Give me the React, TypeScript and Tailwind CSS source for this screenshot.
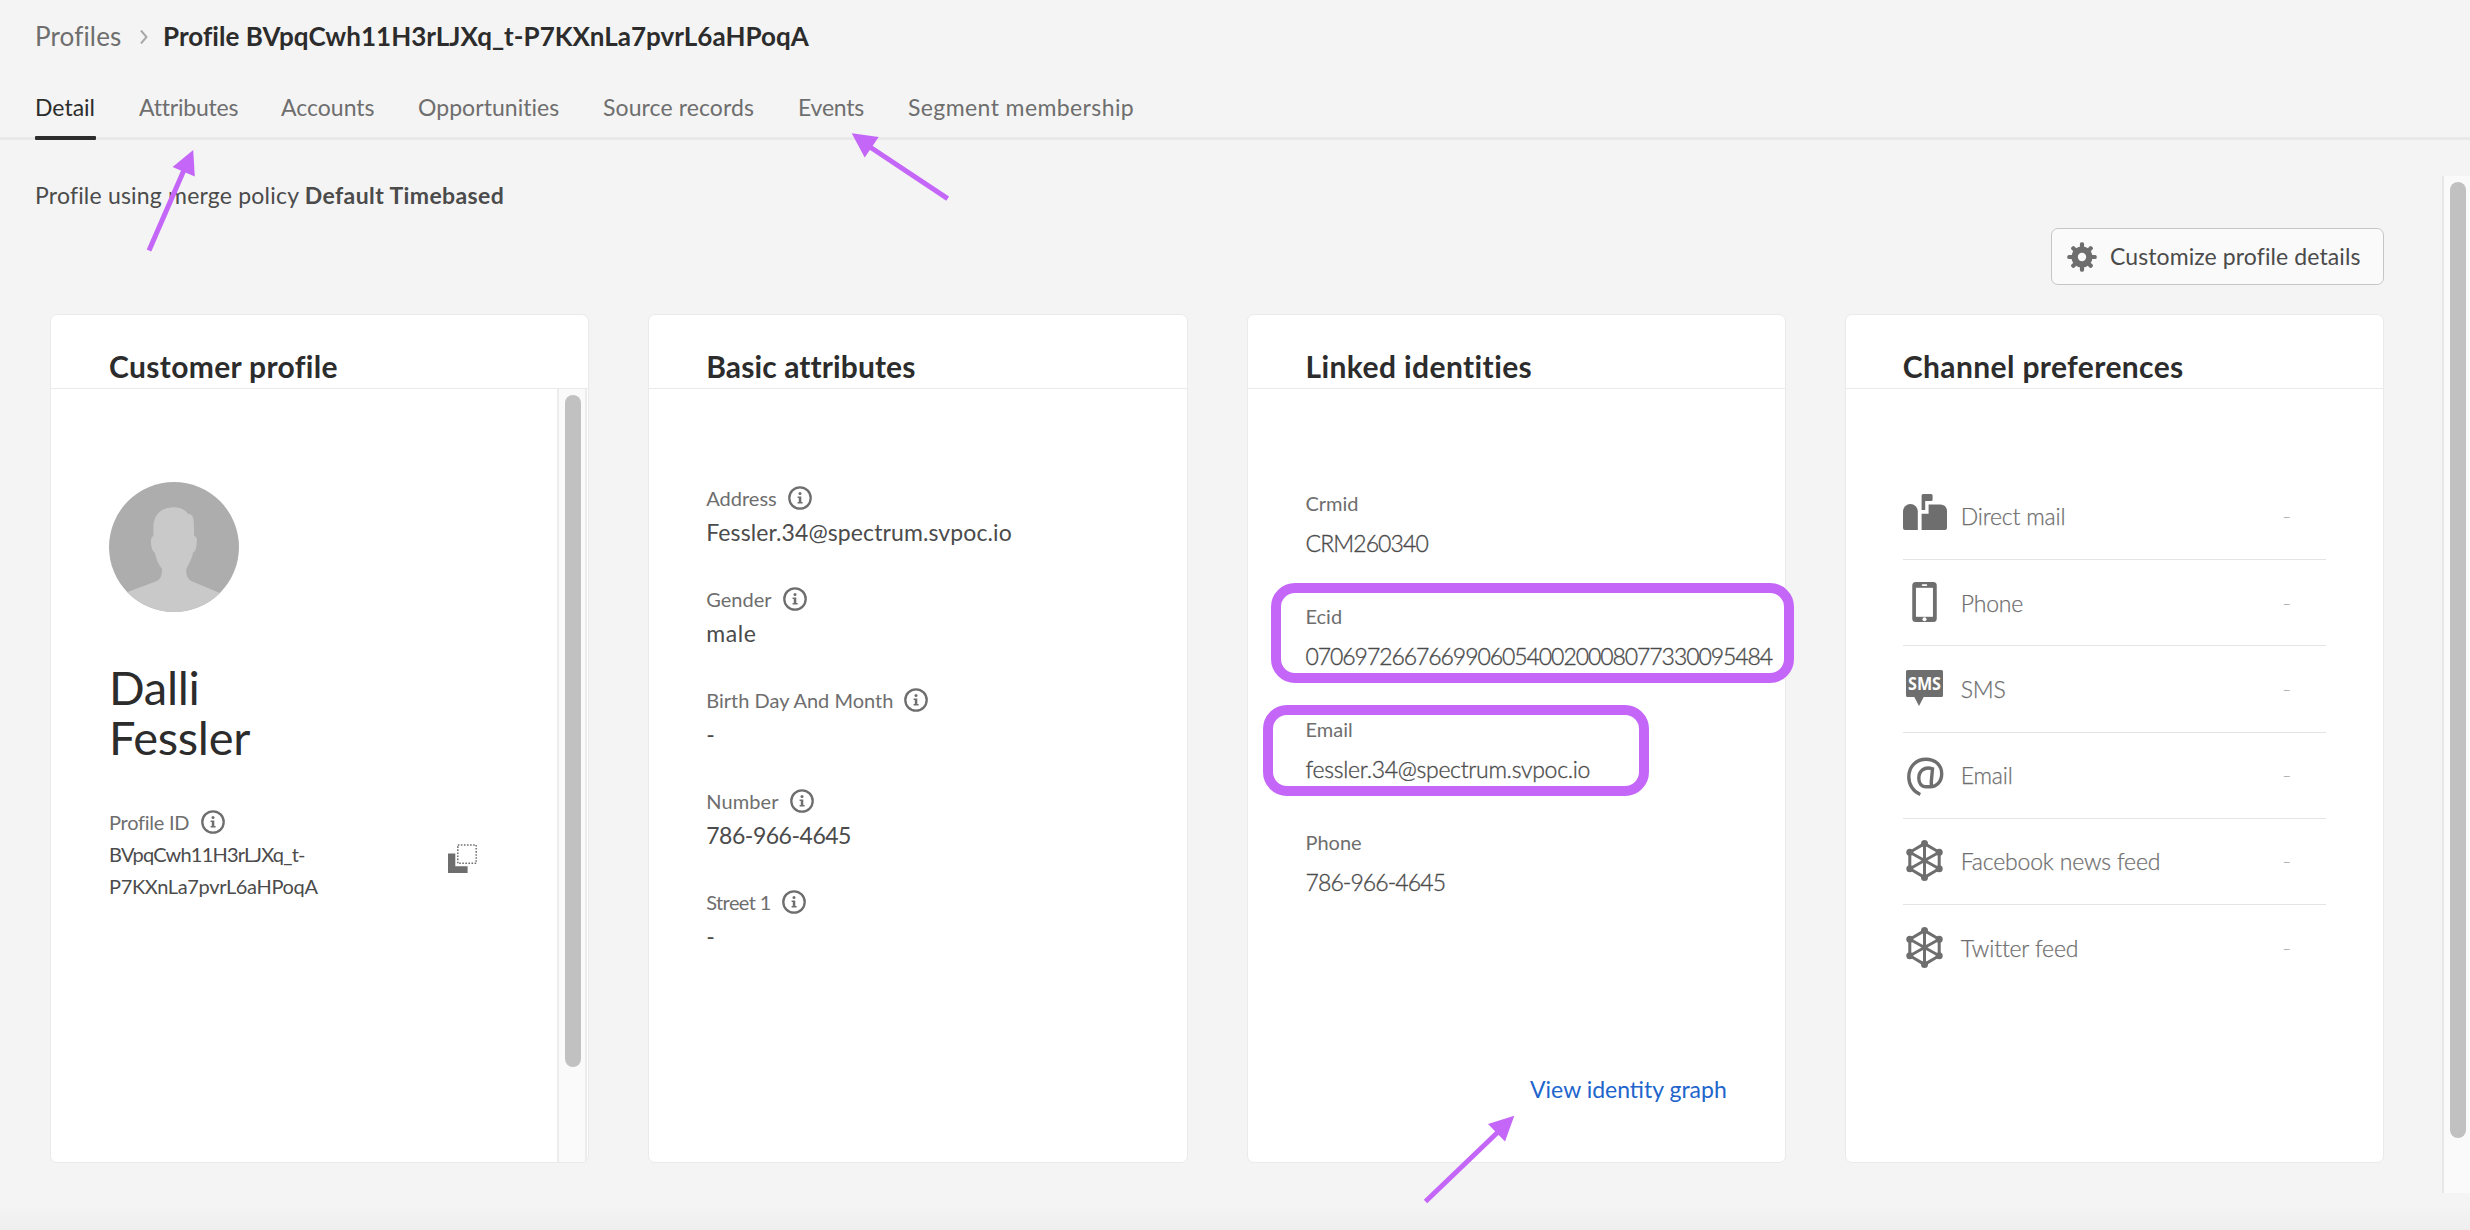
import type { ReactNode } from 'react';

function InfoIcon() {
  return (
    <svg viewBox="0 0 24 24" className="h-6 w-6 shrink-0 text-[#6e6e6e]" fill="none">
      <circle cx="12" cy="12" r="10.7" stroke="currentColor" strokeWidth="2.3" />
      <circle cx="12" cy="7.6" r="1.5" fill="currentColor" />
      <path d="M9.6 10.4h3.7v5.7h1.3v1.5H9.6v-1.5h1.2v-4.2H9.6z" fill="currentColor" />
    </svg>
  );
}

function GearIcon() {
  return (
    <svg viewBox="-15 -15 30 30" className="h-[30px] w-[30px] shrink-0" fill="#6e6e6e">
      {[0, 45, 90, 135].map((a) => (
        <rect
          key={a}
          x="-2.1"
          y={a % 90 ? -14.3 : -14.7}
          width="4.2"
          height={a % 90 ? 28.6 : 29.4}
          rx="1.6"
          transform={`rotate(${a})`}
        />
      ))}
      <circle r="10.6" />
      <circle r="4.2" fill="#fafafa" />
    </svg>
  );
}

function CopyIcon() {
  return (
    <svg viewBox="0 0 29 30" className="h-[30px] w-[29px]" fill="none">
      <path d="M0 9.5h7.3v12.7h12.3V29H0z" fill="#6e6e6e" />
      <rect x="9.8" y="0.9" width="18.4" height="18.4" stroke="#6e6e6e" strokeWidth="1.5" strokeDasharray="1.6 1.47" />
    </svg>
  );
}

function Avatar() {
  return (
    <svg viewBox="0 0 130 130" className="h-[130px] w-[130px]">
      <clipPath id="avatar">
        <circle cx="65" cy="65" r="65" />
      </clipPath>
      <g clipPath="url(#avatar)">
        <rect width="130" height="130" fill="#adadad" />
        <path
          d="M65 25.3C71 25.3 76 27.5 79.3 32C82.5 32 84.5 34 84.8 40L85.2 54C87.6 54.5 88.3 57 87.8 60C87.4 65 86.6 70 84 70.5C83 78 78 84 77.2 88C77 94 79 97.5 84 99.8L111 111L130 130H0L18.5 110L46 99.8C51 98 53 95 53 87C49 82 47 76 45.6 70C43.5 70 42 65 42 59C42 56 43 54.5 44.4 54V45C44.4 33 52 25.3 65 25.3Z"
          fill="#c9c9c9"
        />
      </g>
    </svg>
  );
}

function MailboxIcon() {
  return (
    <svg viewBox="0 0 44 36" className="mb-[9px] h-9 w-11" fill="#6e6e6e">
      <path d="M0 17.5a7.4 7.4 0 0 1 14.8 0V36H2a2 2 0 0 1-2-2z" />
      <path d="M18.6 1.5A1.5 1.5 0 0 1 20.1 0h8a1.5 1.5 0 0 1 1.5 1.5V5.4a1.5 1.5 0 0 1-1.5 1.5H22.2V16H18.6z" />
      <path d="M25.6 10.4H37.5a6.5 6.5 0 0 1 6.5 6.5V34a2 2 0 0 1-2 2H18.6V19.8H25.6z" />
    </svg>
  );
}

function PhoneIcon() {
  return (
    <svg viewBox="0 0 24.5 40" className="mt-[-2px] h-10 w-[25px]">
      <rect width="24.5" height="40" rx="3.5" fill="#6e6e6e" />
      <rect x="3.7" y="5.8" width="17" height="29" fill="#fff" />
      <rect x="9.5" y="2.2" width="5.5" height="1.8" rx="0.9" fill="#fff" />
      <circle cx="12.25" cy="37.3" r="2" fill="#fff" />
    </svg>
  );
}

function SmsIcon() {
  return (
    <svg viewBox="0 0 37 36" className="mt-[-2px] h-9 w-[37px]">
      <path
        d="M1.5 0h34A1.5 1.5 0 0 1 37 1.5V25.5A1.5 1.5 0 0 1 35.5 27H17.7L13 36L8.3 27H1.5A1.5 1.5 0 0 1 0 25.5V1.5A1.5 1.5 0 0 1 1.5 0Z"
        fill="#6e6e6e"
      />
      <text
        x="18.5"
        y="20"
        textAnchor="middle"
        textLength="33"
        lengthAdjust="spacingAndGlyphs"
        fill="#fff"
        className="font-['Open_Sans'] text-[18px] font-bold"
      >
        SMS
      </text>
    </svg>
  );
}

function AtIcon() {
  return (
    <svg viewBox="0 0 44 40" className="mt-[3px] h-10 w-11" fill="none" stroke="#6e6e6e" strokeWidth="3.4">
      <path d="M17.3 37.5C10 34.5 5.8 27.5 5.8 20C5.8 9.5 13.2 2.2 23 2.2C32.3 2.2 38.7 8.3 38.7 16.7C38.7 24.3 34 29.8 27 29.8H23C18.5 29.8 15.8 26.5 15.8 21.3C15.8 14.5 21 9 29.5 11.8L28.3 24.5V29.8" />
    </svg>
  );
}

function FeedIcon() {
  const nodes = [
    [18.5, 3.6],
    [33.2, 12.3],
    [33.2, 28.7],
    [18.5, 37.4],
    [3.8, 28.7],
    [3.8, 12.3],
  ];
  return (
    <svg viewBox="0 0 37 41" className="mt-[-1px] h-[41px] w-[37px]" fill="#6e6e6e" stroke="#6e6e6e">
      <polygon points={nodes.map((n) => n.join(',')).join(' ')} fill="none" strokeWidth="3" />
      <path d="M18.5 3.6V37.4M3.8 12.3L33.2 28.7M33.2 12.3L3.8 28.7" strokeWidth="3" />
      {nodes.map(([x, y]) => (
        <circle key={`${x}-${y}`} cx={x} cy={y} r="3.5" stroke="none" />
      ))}
      <circle cx="18.5" cy="20.5" r="3" stroke="none" />
    </svg>
  );
}

function Card({ title, titleClass, children }: { title: string; titleClass: string; children: ReactNode }) {
  return (
    <section className="flex flex-col overflow-hidden rounded-[7px] border border-[#eaeaea] bg-white">
      <h2 className={`h-[74px] shrink-0 border-b border-[#eaeaea] pt-[31px] text-[30px] leading-10 font-bold text-[#2c2c2c] ${titleClass}`}>
        {title}
      </h2>
      {children}
    </section>
  );
}

const tabs = [
  { label: 'Detail', cls: 'w-[60px]' },
  { label: 'Attributes', cls: 'w-[99px] tracking-[-0.2px]' },
  { label: 'Accounts', cls: 'w-[94px]' },
  { label: 'Opportunities', cls: 'w-[142px] tracking-[0.05px]' },
  { label: 'Source records', cls: 'w-[152px] tracking-[0.1px]' },
  { label: 'Events', cls: 'w-[67px] tracking-[-0.2px]' },
  { label: 'Segment membership', cls: 'w-[227px] tracking-[0.4px]' },
];

const attributes = [
  { label: 'Address', value: 'Fessler.34@spectrum.svpoc.io', labelCls: '', cls: 'tracking-[0.1px]' },
  { label: 'Gender', value: 'male', labelCls: '', cls: 'tracking-[0.6px]' },
  { label: 'Birth Day And Month', value: '-', labelCls: '', cls: '' },
  { label: 'Number', value: '786-966-4645', labelCls: 'tracking-[0.1px]', cls: 'tracking-[-0.48px]' },
  { label: 'Street 1', value: '-', labelCls: 'tracking-[-0.6px]', cls: '' },
];

const identities = [
  { label: 'Crmid', value: 'CRM260340', cls: 'tracking-[-0.9px]' },
  { label: 'Ecid', value: '07069726676699060540020008077330095484', cls: 'tracking-[-1.06px]' },
  { label: 'Email', value: 'fessler.34@spectrum.svpoc.io', cls: 'tracking-[-0.3px]' },
  { label: 'Phone', value: '786-966-4645', cls: 'tracking-[-0.9px]' },
];

const channels = [
  { label: 'Direct mail', icon: <MailboxIcon /> },
  { label: 'Phone', icon: <PhoneIcon /> },
  { label: 'SMS', icon: <SmsIcon /> },
  { label: 'Email', icon: <AtIcon /> },
  { label: 'Facebook news feed', icon: <FeedIcon /> },
  { label: 'Twitter feed', icon: <FeedIcon /> },
];

export default function App() {
  return (
    <div className="relative flex h-[1230px] w-[2470px] flex-col overflow-hidden bg-[#f4f4f4] font-[Lato,'Open_Sans',sans-serif] text-[23px] whitespace-nowrap text-[#4b4b4b]">
      <header className="border-b-[3px] border-[#e9e9e9]">
        <div className="flex h-[72px] items-center pl-[35px] text-[26px]">
          <span className="w-[105px] tracking-[0.15px] text-[#6e6e6e]">Profiles</span>
          <svg viewBox="0 0 8 14" className="mt-[2px] mr-[15px] h-[14px] w-2" fill="none" stroke="#a8a8a8" strokeWidth="2">
            <path d="M1 0.5L6.5 7L1 13.5" />
          </svg>
          <h1 className="font-bold tracking-[0.03px] text-[#2c2c2c]">Profile BVpqCwh11H3rLJXq_t-P7KXnLa7pvrL6aHPoqA</h1>
        </div>
        <nav className="flex h-[65px] gap-[43px] pt-[19px] pl-[35px] leading-8 text-[#6e6e6e]">
          {tabs.map((t, i) => (
            <div key={t.label} className={`flex flex-col justify-between ${t.cls} ${i === 0 ? 'text-[#2c2c2c]' : ''}`}>
              <span className={i === 0 ? '' : 'pl-px'}>{t.label}</span>
              {i === 0 && <span className="-mb-[3px] h-1 w-[61px] rounded-[1px] bg-[#2c2c2c]" />}
            </div>
          ))}
        </nav>
      </header>

      <main className="flex flex-1">
        <div className="flex w-[2442px] flex-col">
          <p className="pt-[39px] pl-[35px] leading-8">
            <span className="tracking-[0.2px]">Profile using merge policy </span>
            <strong className="tracking-[0.4px]">Default Timebased</strong>
          </p>
          <button className="mt-[17px] mr-[58px] flex h-[57px] w-[333px] items-center gap-[13px] self-end rounded-[7px] border border-[#c6c6c6] bg-[#fafafa] pl-[15px] tracking-[0.1px]">
            <GearIcon />
            Customize profile details
          </button>

          <div className="mt-[29px] ml-[50px] grid h-[849px] w-[2334px] grid-cols-4 gap-[59px]">
            <Card title="Customer profile" titleClass="pl-[58px] tracking-[0.34px]">
              <div className="flex flex-1">
                <div className="flex flex-1 flex-col pt-[93px] pl-[58px]">
                  <Avatar />
                  <div className="mt-[50px] text-[47px] leading-[50px] tracking-[-0.3px] text-[#2c2c2c]">
                    Dalli
                    <br />
                    Fessler
                  </div>
                  <div className="mt-[46px] flex h-7 items-center gap-3 text-[20px] text-[#6e6e6e]">
                    <span className="tracking-[-0.25px]">Profile ID</span>
                    <InfoIcon />
                  </div>
                  <div className="mt-[2px] flex items-start justify-between pr-20 text-[20px] leading-8">
                    <div>
                      <div className="tracking-[-0.78px]">BVpqCwh11H3rLJXq_t-</div>
                      <div className="tracking-[-0.35px]">P7KXnLa7pvrL6aHPoqA</div>
                    </div>
                    <div className="pt-[6px]">
                      <CopyIcon />
                    </div>
                  </div>
                </div>
                <div className="mr-px flex w-[30px] border-x-2 border-[#ececec] bg-[#fafafa] pt-[6px] pl-[6px]">
                  <div className="h-[672px] w-4 rounded-full bg-[#c1c1c1]" />
                </div>
              </div>
            </Card>

            <Card title="Basic attributes" titleClass="pl-[57px] tracking-[0.1px]">
              <div className="flex flex-col pt-[95px] pl-[57px]">
                {attributes.map((a) => (
                  <div key={a.label} className="h-[101px]">
                    <div className="flex h-7 items-center gap-[11px] text-[20px] text-[#6e6e6e]">
                      <span className={a.labelCls}>{a.label}</span>
                      <InfoIcon />
                    </div>
                    <div className={`leading-[41px] ${a.cls}`}>{a.value}</div>
                  </div>
                ))}
              </div>
            </Card>

            <Card title="Linked identities" titleClass="pl-[58px] tracking-[0.4px]">
              <div className="flex flex-1 flex-col pt-[100px] pl-[58px]">
                {identities.map((d) => (
                  <div key={d.label} className="h-[113px]">
                    <div className="h-7 text-[20px] leading-7 text-[#6e6e6e]">{d.label}</div>
                    <div className={`mt-[6px] leading-10 font-light [-webkit-text-stroke:0.35px] ${d.cls}`}>{d.value}</div>
                  </div>
                ))}
                <a className="mt-auto mr-[58px] mb-[57px] self-end leading-8 text-[#2165cc]">View identity graph</a>
              </div>
            </Card>

            <Card title="Channel preferences" titleClass="pl-[57px] tracking-[0.38px]">
              <div className="flex flex-col px-[57px] pt-[85px]">
                {channels.map((c, i) => (
                  <div
                    key={c.label}
                    className={`flex h-[86.2px] items-center font-light text-[#6e6e6e] ${i < channels.length - 1 ? 'border-b border-[#e4e4e4]' : ''}`}
                  >
                    <div className="mr-[14px] flex w-11 items-center justify-center">{c.icon}</div>
                    <span className="tracking-[-0.18px] [-webkit-text-stroke:0.25px]">{c.label}</span>
                    <span className="mr-[35px] ml-auto text-[#b3b3b3] [-webkit-text-stroke:0.25px]">-</span>
                  </div>
                ))}
              </div>
            </Card>
          </div>
        </div>

        <div className="mt-9 flex h-[1017px] w-7 border-l-2 border-[#e7e7e7] bg-[#fafafa] pt-[6px] pl-[6px]">
          <div className="h-[956px] w-4 rounded-full bg-[#c1c1c1]" />
        </div>
      </main>

      <div className="absolute bottom-0 left-0 h-6 w-full bg-linear-to-b from-transparent to-black/[0.025]" />
      <div className="absolute top-[583px] left-[1271px] h-[100px] w-[523px] rounded-[24px] border-10 border-[#c466f8]" />
      <div className="absolute top-[705px] left-[1263px] h-[91px] w-[386px] rounded-[24px] border-10 border-[#c466f8]" />
      <svg viewBox="0 0 2470 1230" className="pointer-events-none absolute inset-0 h-full w-full" fill="#c466f8" stroke="#c466f8">
        <g strokeWidth="5">
          <path d="M149 250.5L184 170" />
          <path d="M947.7 198.7L870 147" />
          <path d="M1425.5 1201.5L1498 1132" />
        </g>
        <g stroke="none">
          <path d="M193.2 150L172.6 167L194.8 176.5Z" />
          <path d="M851.7 133.3L878.7 137L864.7 157.5Z" />
          <path d="M1514.3 1115.7L1488 1124L1505 1141.5Z" />
        </g>
      </svg>
    </div>
  );
}
